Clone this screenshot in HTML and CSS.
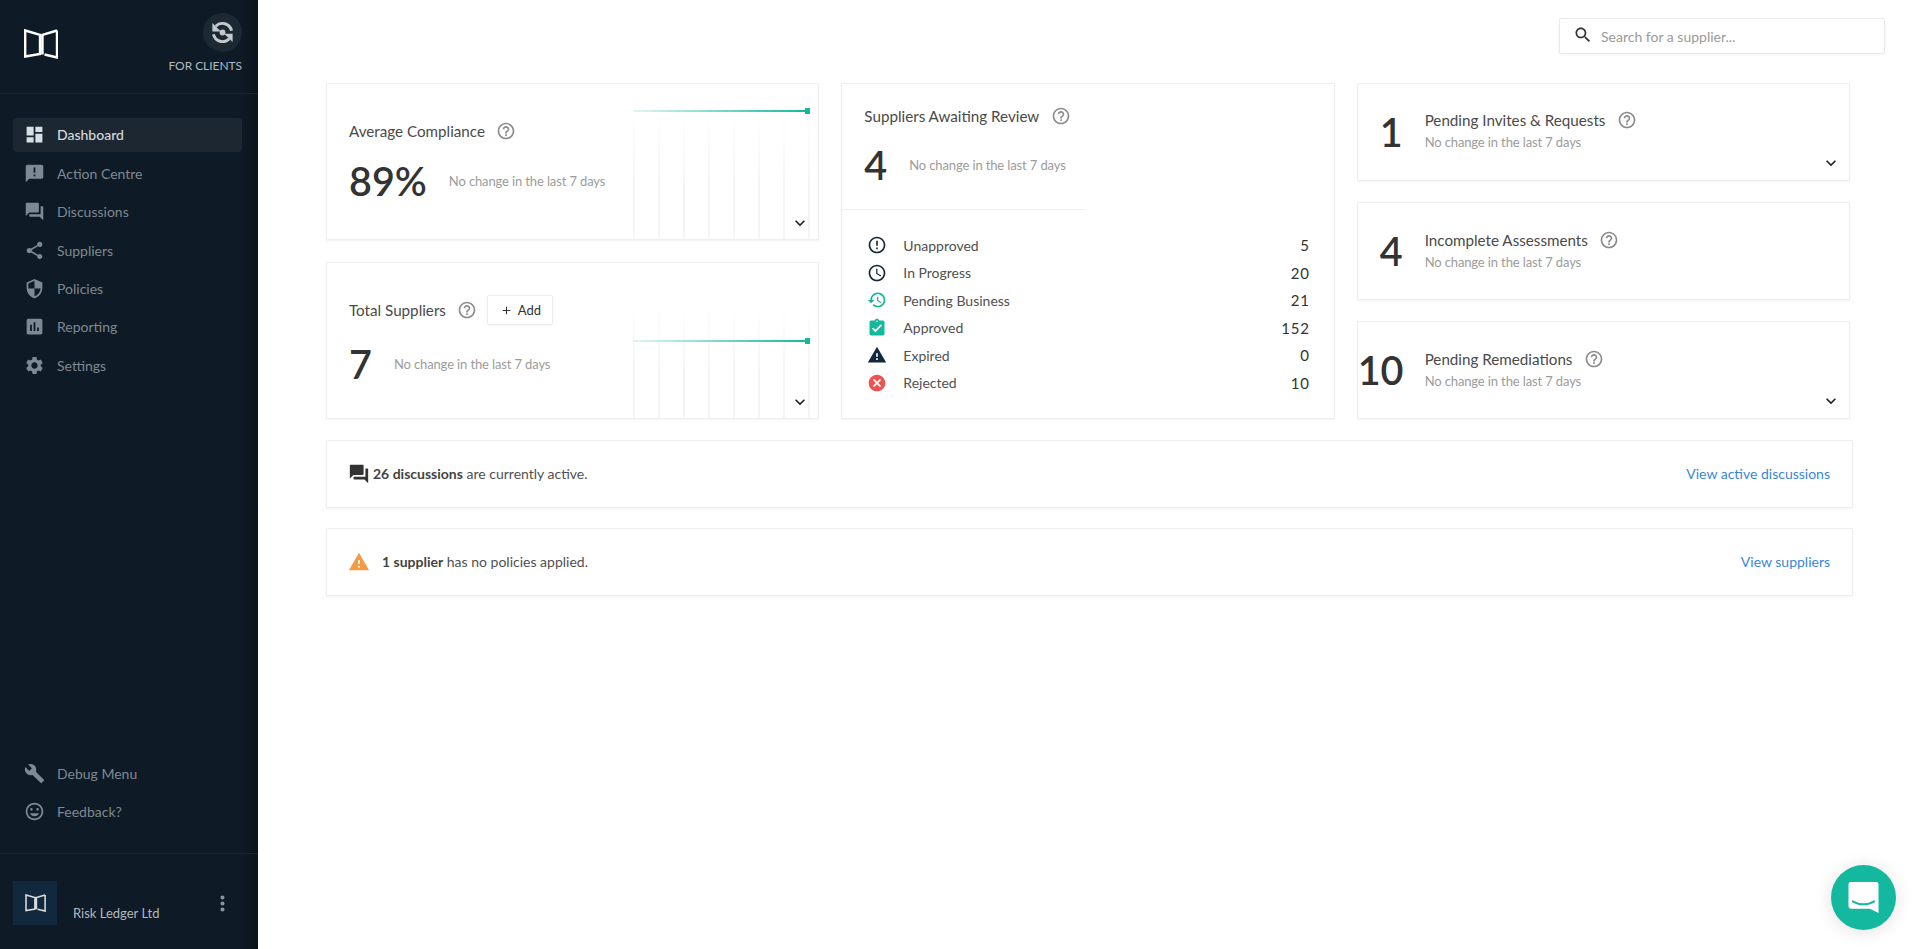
FILE: index.html
```html
<!DOCTYPE html>
<html lang="en">
<head>
<meta charset="utf-8">
<title>Risk Ledger Dashboard</title>
<link rel="stylesheet" href="styles.css">
</head>
<body>
<svg class="sprite" xmlns="http://www.w3.org/2000/svg" aria-hidden="true">
  <symbol id="i-dashboard" viewBox="0 0 24 24"><path d="M3 13h8V3H3v10zm0 8h8v-6H3v6zm10 0h8V11h-8v10zm0-18v6h8V3h-8z"/></symbol>
  <symbol id="i-announce" viewBox="0 0 24 24"><path d="M20 2H4c-1.1 0-1.99.9-1.99 2L2 22l4-4h14c1.1 0 2-.9 2-2V4c0-1.1-.9-2-2-2zm-7 9h-2V5h2v6zm0 4h-2v-2h2v2z"/></symbol>
  <symbol id="i-forum" viewBox="0 0 24 24"><path d="M21 6h-2v9H6v2c0 .55.45 1 1 1h11l4 4V7c0-.55-.45-1-1-1zm-4 6V3c0-.55-.45-1-1-1H3c-.55 0-1 .45-1 1v14l4-4h10c.55 0 1-.45 1-1z"/></symbol>
  <symbol id="i-share" viewBox="0 0 24 24"><path d="M18 16.08c-.76 0-1.44.3-1.96.77L8.91 12.7c.05-.23.09-.46.09-.7s-.04-.47-.09-.7l7.05-4.11c.54.5 1.25.81 2.04.81 1.66 0 3-1.34 3-3s-1.34-3-3-3-3 1.34-3 3c0 .24.04.47.09.7L8.04 9.81C7.5 9.31 6.79 9 6 9c-1.66 0-3 1.34-3 3s1.34 3 3 3c.79 0 1.5-.31 2.04-.81l7.12 4.16c-.05.21-.08.43-.08.65 0 1.61 1.31 2.92 2.92 2.92 1.61 0 2.92-1.31 2.92-2.92s-1.31-2.92-2.92-2.92z"/></symbol>
  <symbol id="i-security" viewBox="0 0 24 24"><path d="M12 1L3 5v6c0 5.55 3.84 10.74 9 12 5.16-1.26 9-6.45 9-12V5l-9-4zm0 10.99h7c-.53 4.12-3.28 7.79-7 8.94V12H5V6.3l7-3.11v8.8z"/></symbol>
  <symbol id="i-report" viewBox="0 0 24 24"><path d="M19 3H5c-1.1 0-2 .9-2 2v14c0 1.1.9 2 2 2h14c1.1 0 2-.9 2-2V5c0-1.1-.9-2-2-2zM9 17H7v-7h2v7zm4 0h-2V7h2v10zm4 0h-2v-4h2v4z"/></symbol>
  <symbol id="i-settings" viewBox="0 0 24 24"><path d="M19.14 12.94c.04-.3.06-.61.06-.94 0-.32-.02-.64-.07-.94l2.03-1.58c.18-.14.23-.41.12-.61l-1.92-3.32c-.12-.22-.37-.29-.59-.22l-2.39.96c-.5-.38-1.03-.7-1.62-.94l-.36-2.54c-.04-.24-.24-.41-.48-.41h-3.84c-.24 0-.43.17-.47.41l-.36 2.54c-.59.24-1.13.57-1.62.94l-2.39-.96c-.22-.08-.47 0-.59.22L2.74 8.87c-.12.21-.08.47.12.61l2.03 1.58c-.05.3-.09.63-.09.94s.02.64.07.94l-2.03 1.58c-.18.14-.23.41-.12.61l1.92 3.32c.12.22.37.29.59.22l2.39-.96c.5.38 1.03.7 1.62.94l.36 2.54c.05.24.24.41.48.41h3.84c.24 0 .44-.17.47-.41l.36-2.54c.59-.24 1.13-.56 1.62-.94l2.39.96c.22.08.47 0 .59-.22l1.92-3.32c.12-.22.07-.47-.12-.61l-2.01-1.58zM12 15.6c-1.98 0-3.6-1.62-3.6-3.6s1.62-3.6 3.6-3.6 3.6 1.62 3.6 3.6-1.62 3.6-3.6 3.6z"/></symbol>
  <symbol id="i-build" viewBox="0 0 24 24"><path d="M22.7 19l-9.1-9.1c.9-2.3.4-5-1.5-6.9-2-2-5-2.4-7.4-1.3L9 6 6 9 1.6 4.7C.4 7.1.9 10.1 2.9 12.1c1.9 1.9 4.6 2.4 6.9 1.5l9.1 9.1c.4.4 1 .4 1.4 0l2.3-2.3c.5-.4.5-1.1.1-1.4z"/></symbol>
  <symbol id="i-mood" viewBox="0 0 24 24"><path d="M11.99 2C6.47 2 2 6.48 2 12s4.47 10 9.99 10C17.52 22 22 17.52 22 12S17.52 2 11.99 2zM12 20c-4.42 0-8-3.58-8-8s3.58-8 8-8 8 3.58 8 8-3.58 8-8 8zm3.5-9c.83 0 1.5-.67 1.5-1.5S16.33 8 15.5 8 14 8.67 14 9.5s.67 1.5 1.5 1.5zm-7 0c.83 0 1.5-.67 1.5-1.5S9.33 8 8.5 8 7 8.67 7 9.5 7.67 11 8.5 11zm3.5 6.5c2.33 0 4.31-1.46 5.11-3.5H6.89c.8 2.04 2.78 3.5 5.11 3.5z"/></symbol>
  <symbol id="i-more" viewBox="0 0 24 24"><path d="M12 8c1.1 0 2-.9 2-2s-.9-2-2-2-2 .9-2 2 .9 2 2 2zm0 2c-1.1 0-2 .9-2 2s.9 2 2 2 2-.9 2-2-.9-2-2-2zm0 6c-1.1 0-2 .9-2 2s.9 2 2 2 2-.9 2-2-.9-2-2-2z"/></symbol>
  <symbol id="i-sync" viewBox="0 0 24 24"><path class="sync-arc" d="M20 10.500A8.200 8.200 0 0 0 6 6.500"/><path class="sync-arc" d="M4 13.500A8.200 8.200 0 0 0 18 17.500"/><path d="M3 3.500V11h7.500zM21 20.500V13h-7.500z"/><circle cx="12" cy="12" r="2.600"/></symbol>
  <symbol id="i-help" viewBox="0 0 24 24"><path d="M11 18h2v-2h-2v2zm1-16C6.48 2 2 6.48 2 12s4.48 10 10 10 10-4.48 10-10S17.52 2 12 2zm0 18c-4.41 0-8-3.59-8-8s3.59-8 8-8 8 3.59 8 8-3.59 8-8 8zm0-14c-2.21 0-4 1.79-4 4h2c0-1.1.9-2 2-2s2 .9 2 2c0 2-3 1.75-3 5h2c0-2.25 3-2.5 3-5 0-2.21-1.79-4-4-4z"/></symbol>
  <symbol id="i-error" viewBox="0 0 24 24"><path d="M11 15h2v2h-2zm0-8h2v6h-2zm.99-5C6.47 2 2 6.48 2 12s4.47 10 9.99 10C17.52 22 22 17.52 22 12S17.52 2 11.99 2zM12 20c-4.42 0-8-3.58-8-8s3.58-8 8-8 8 3.58 8 8-3.58 8-8 8z"/></symbol>
  <symbol id="i-clock" viewBox="0 0 24 24"><path d="M11.99 2C6.47 2 2 6.48 2 12s4.47 10 9.99 10C17.52 22 22 17.52 22 12S17.52 2 11.99 2zM12 20c-4.42 0-8-3.58-8-8s3.58-8 8-8 8 3.58 8 8-3.58 8-8 8zm.5-13H11v6l5.25 3.15.75-1.23-4.5-2.67z"/></symbol>
  <symbol id="i-history" viewBox="0 0 24 24"><path d="M13 3c-4.97 0-9 4.03-9 9H1l3.89 3.89.07.14L9 12H6c0-3.87 3.13-7 7-7s7 3.13 7 7-3.13 7-7 7c-1.93 0-3.68-.79-4.94-2.06l-1.42 1.42C8.27 19.99 10.51 21 13 21c4.97 0 9-4.03 9-9s-4.03-9-9-9zm-1 5v5l4.28 2.54.72-1.21-3.5-2.08V8H12z"/></symbol>
  <symbol id="i-check" viewBox="0 0 24 24"><path d="M19 3h-4.18C14.4 1.84 13.3 1 12 1c-1.3 0-2.4.84-2.82 2H5c-1.1 0-2 .9-2 2v14c0 1.1.9 2 2 2h14c1.1 0 2-.9 2-2V5c0-1.1-.9-2-2-2zm-7 0c.55 0 1 .45 1 1s-.45 1-1 1-1-.45-1-1 .45-1 1-1zm-2 14l-4-4 1.41-1.41L10 14.17l6.59-6.59L18 9l-8 8z"/></symbol>
  <symbol id="i-warning" viewBox="0 0 24 24"><path d="M1 21h22L12 2 1 21zm12-3h-2v-2h2v2zm0-4h-2v-4h2v4z"/></symbol>
  <symbol id="i-cancel" viewBox="0 0 24 24"><path d="M12 2C6.47 2 2 6.47 2 12s4.47 10 10 10 10-4.47 10-10S17.53 2 12 2zm5 13.59L15.59 17 12 13.41 8.41 17 7 15.59 10.59 12 7 8.41 8.41 7 12 10.59 15.59 7 17 8.41 13.41 12 17 15.59z"/></symbol>
  <symbol id="i-search" viewBox="0 0 24 24"><path d="M15.5 14h-.79l-.28-.27C15.41 12.59 16 11.11 16 9.5 16 5.91 13.09 3 9.5 3S3 5.91 3 9.5 5.91 16 9.5 16c1.61 0 3.09-.59 4.23-1.57l.27.28v.79l5 4.99L20.49 19l-4.99-5zm-6 0C7.01 14 5 11.99 5 9.5S7.01 5 9.5 5 14 7.01 14 9.5 11.99 14 9.5 14z"/></symbol>
  <symbol id="i-chevron" viewBox="0 0 24 24"><path d="M16.59 8.59L12 13.17 7.41 8.59 6 10l6 6 6-6z"/></symbol>
  <symbol id="i-plus" viewBox="0 0 24 24"><path d="M19 13h-6v6h-2v-6H5v-2h6V5h2v6h6v2z"/></symbol>
  <symbol id="i-logo" viewBox="0 0 34 30"><path d="M1.200 1.500L16 5.800V25L1.200 27.500zM33 1.500L18.500 5.800V25.500M20.500 25.500L33 28.500V1.500"/></symbol>
</svg>

<div class="app">
  <aside class="sidebar">
    <div class="side-head">
      <svg class="logo"><use href="#i-logo"/></svg>
      <div class="switch">
        <span class="switch-circle"><svg class="switch-icon"><use href="#i-sync"/></svg></span>
        <span class="switch-label">FOR CLIENTS</span>
      </div>
    </div>
    <nav class="nav">
      <a class="nav-item active"><svg class="nav-icon"><use href="#i-dashboard"/></svg>Dashboard</a>
      <a class="nav-item"><svg class="nav-icon"><use href="#i-announce"/></svg>Action Centre</a>
      <a class="nav-item"><svg class="nav-icon"><use href="#i-forum"/></svg>Discussions</a>
      <a class="nav-item"><svg class="nav-icon"><use href="#i-share"/></svg>Suppliers</a>
      <a class="nav-item"><svg class="nav-icon"><use href="#i-security"/></svg>Policies</a>
      <a class="nav-item"><svg class="nav-icon"><use href="#i-report"/></svg>Reporting</a>
      <a class="nav-item"><svg class="nav-icon"><use href="#i-settings"/></svg>Settings</a>
    </nav>
    <nav class="nav nav-bottom">
      <a class="nav-item"><svg class="nav-icon"><use href="#i-build"/></svg>Debug Menu</a>
      <a class="nav-item"><svg class="nav-icon"><use href="#i-mood"/></svg>Feedback?</a>
    </nav>
    <div class="org">
      <span class="org-tile"><svg class="org-logo"><use href="#i-logo"/></svg></span>
      <span class="org-name">Risk Ledger Ltd</span>
      <svg class="org-more"><use href="#i-more"/></svg>
    </div>
  </aside>

  <main class="main">
    <div class="topbar">
      <label class="search">
        <svg class="search-icon"><use href="#i-search"/></svg>
        <span class="search-text">Search for a supplier...</span>
      </label>
    </div>

    <section class="grid">
      <div class="stack">
        <article class="card chart-card compliance">
          <div class="chart"><span class="chart-line"></span><span class="chart-dot"></span></div>
          <h2 class="title">Average Compliance<svg class="help"><use href="#i-help"/></svg></h2>
          <div class="figure"><span class="num">89%</span><span class="sub">No change in the last 7 days</span></div>
          <svg class="chevron"><use href="#i-chevron"/></svg>
        </article>
        <article class="card chart-card total">
          <div class="chart chart-low"><span class="chart-line"></span><span class="chart-dot"></span></div>
          <h2 class="title">Total Suppliers<svg class="help"><use href="#i-help"/></svg><span class="add"><svg class="add-icon"><use href="#i-plus"/></svg>Add</span></h2>
          <div class="figure"><span class="num">7</span><span class="sub">No change in the last 7 days</span></div>
          <svg class="chevron"><use href="#i-chevron"/></svg>
        </article>
      </div>

      <article class="card review">
        <div class="review-head">
          <h2 class="title">Suppliers Awaiting Review<svg class="help"><use href="#i-help"/></svg></h2>
          <div class="figure"><span class="num">4</span><span class="sub">No change in the last 7 days</span></div>
        </div>
        <ul class="status-list">
          <li class="status"><svg class="status-icon navy"><use href="#i-error"/></svg><span class="status-label">Unapproved</span><span class="status-val">5</span></li>
          <li class="status"><svg class="status-icon navy"><use href="#i-clock"/></svg><span class="status-label">In Progress</span><span class="status-val">20</span></li>
          <li class="status"><svg class="status-icon teal"><use href="#i-history"/></svg><span class="status-label">Pending Business</span><span class="status-val">21</span></li>
          <li class="status"><svg class="status-icon teal"><use href="#i-check"/></svg><span class="status-label">Approved</span><span class="status-val">152</span></li>
          <li class="status"><svg class="status-icon navy"><use href="#i-warning"/></svg><span class="status-label">Expired</span><span class="status-val">0</span></li>
          <li class="status"><svg class="status-icon red"><use href="#i-cancel"/></svg><span class="status-label">Rejected</span><span class="status-val">10</span></li>
        </ul>
      </article>

      <div class="stack stack-three">
        <article class="card mini">
          <span class="num mini-num">1</span>
          <div class="mini-body"><h2 class="title">Pending Invites &amp; Requests<svg class="help"><use href="#i-help"/></svg></h2><span class="sub">No change in the last 7 days</span></div>
          <svg class="chevron chevron-mini"><use href="#i-chevron"/></svg>
        </article>
        <article class="card mini">
          <span class="num mini-num">4</span>
          <div class="mini-body"><h2 class="title">Incomplete Assessments<svg class="help"><use href="#i-help"/></svg></h2><span class="sub">No change in the last 7 days</span></div>
        </article>
        <article class="card mini">
          <span class="num mini-num">10</span>
          <div class="mini-body"><h2 class="title">Pending Remediations<svg class="help"><use href="#i-help"/></svg></h2><span class="sub">No change in the last 7 days</span></div>
          <svg class="chevron chevron-mini"><use href="#i-chevron"/></svg>
        </article>
      </div>
    </section>

    <section class="notices">
      <div class="card notice">
        <svg class="notice-icon dark"><use href="#i-forum"/></svg>
        <p class="notice-text"><b>26 discussions</b> are currently active.</p>
        <a class="notice-link">View active discussions</a>
      </div>
      <div class="card notice">
        <svg class="notice-icon orange"><use href="#i-warning"/></svg>
        <p class="notice-text notice-warn"><b>1 supplier</b> has no policies applied.</p>
        <a class="notice-link">View suppliers</a>
      </div>
    </section>
  </main>
</div>

<div class="chat">
  <svg class="chat-icon" viewBox="0 0 32 34"><path class="chat-bubble" d="M3 1h26a2.500 2.500 0 0 1 2.500 2.500V33l-9-4.500H3A2.500 2.500 0 0 1 .5 26V3.500A2.500 2.500 0 0 1 3 1z"/><path class="chat-smile" d="M5 21c6 4 16 4 22 0"/></svg>
</div>
</body>
</html>
```

FILE: styles.css
```css
* { box-sizing: border-box; }
html, body { margin: 0; height: 100%; overflow: hidden; background: #fff; }
body { font-family: "Lato", "Liberation Sans", sans-serif; color: #3c3c3c; }
h2, p, ul { margin: 0; padding: 0; font-weight: inherit; font-size: inherit; }
ul { list-style: none; }
.sprite { display: none; }
.app { display: flex; height: 949px; }

/* Sidebar */
.sidebar {
  flex: 0 0 258px; height: 949px; display: flex; flex-direction: column;
  background: linear-gradient(90deg, #0e1a26 0, #0e1a26 93%, #0a141c 100%);
  color: #8b949c;
}
.side-head {
  height: 94px; flex: none; display: flex; justify-content: space-between; align-items: flex-start;
  padding: 13px 16px 0 24px; border-bottom: 1px solid #17232e;
}
.logo { width: 34px; height: 30px; margin-top: 16px; fill: none; stroke: #fff; stroke-width: 2.4; }
.switch { display: flex; flex-direction: column; align-items: flex-end; }
.switch-circle { width: 39px; height: 39px; border-radius: 50%; background: #1c2832; display: flex; align-items: center; justify-content: center; }
.switch-icon { width: 27px; height: 27px; fill: #c3c9ce; }
.sync-arc { fill: none; stroke: #c3c9ce; stroke-width: 2.6; }
.switch-label { margin-top: 6px; font-size: 12px; line-height: 16px; color: #b3b9be; letter-spacing: -.05px; }
.nav { display: flex; flex-direction: column; gap: 4.400px; padding: 24px 16px 0 13px; }
.nav-bottom { margin-top: auto; gap: 4px; padding-top: 0; }
.nav-item {
  height: 34px; display: flex; align-items: center; padding-left: 11px; border-radius: 4px;
  font-size: 14px; color: #7f8991;
}
.nav-item.active { background: #1c2731; color: #d6dade; font-weight: 500; padding-bottom: 2px; }
.nav-icon { width: 21px; height: 21px; flex: none; margin-right: 12px; fill: #7d8993; }
.active .nav-icon { fill: #d6dfe6; }
.org {
  flex: none; height: 96px; margin-top: 25px; border-top: 1px solid #17232e;
  display: flex; align-items: flex-start; padding: 27px 0 0 13px; position: relative;
}
.org-tile { width: 44px; height: 44px; background: #12293d; display: flex; align-items: center; justify-content: center; }
.org-logo { width: 21px; height: 18px; fill: none; stroke: #d9dde0; stroke-width: 2.6; }
.org-name { margin: 23px 0 0 16px; font-size: 13px; line-height: 18px; color: #b3b9be; }
.org-more { width: 21px; height: 21px; margin: 12px 0 0 53px; fill: #8b949c; transform: scale(1.15); }

/* Main */
.main { flex: 1; min-width: 0; padding: 18px 0 0 68px; }
.topbar { display: flex; justify-content: flex-end; padding-right: 32px; }
.search {
  width: 326px; height: 36px; display: flex; align-items: center; padding-left: 13px;
  border: 1px solid #eaeaea; border-radius: 2px; box-shadow: 0 1px 3px rgba(0,0,0,.05);
}
.search-icon { width: 20px; height: 20px; fill: #333; margin-right: 8px; margin-top: -3px; }
.search-text { font-size: 14px; color: #9a9a9a; }

.grid {
  width: 1524px; margin-top: 29px; display: grid; grid-template-columns: repeat(3, 1fr);
  column-gap: 22px; height: 336px;
}
.stack { display: grid; grid-template-rows: 157px 157px; row-gap: 22px; }
.stack-three { grid-template-rows: 98px 98px 98px; row-gap: 21px; }
.card { background: #fff; border: 1px solid #eee; border-radius: 1px; box-shadow: 0 1px 2px rgba(0,0,0,.05); position: relative; }
.title { display: flex; align-items: center; font-size: 15.200px; line-height: 20px; color: #4a4a4a; font-weight: 400; }
.help { width: 20px; height: 20px; margin-left: 11.500px; fill: #8c8c8c; flex: none; }
.figure { display: flex; align-items: center; gap: 22px; }
.num { font-size: 39.500px; line-height: 48px; color: #333; font-weight: 600; }
.sub { font-size: 13px; letter-spacing: -.13px; color: #9c9c9c; font-weight: 400; }

.chart-card { padding-left: 22px; }
.compliance { padding-top: 37px; }
.total { padding-top: 32px; }
.compliance .figure { margin-top: 16px; }
.total .figure { margin-top: 14.500px; }
.chart { position: absolute; left: 306px; right: 8px; bottom: 0; top: 27px; }
.chart::before {
  content: ""; position: absolute; inset: 0;
  background: repeating-linear-gradient(90deg, #f5f5f5 0, #f5f5f5 1.500px, transparent 1.500px, transparent 25px);
  -webkit-mask-image: linear-gradient(180deg, transparent 0, #000 55%);
  mask-image: linear-gradient(180deg, transparent 0, #000 55%);
}
.chart-low { top: 78px; }
.chart-low::before { top: -38px; }
.chart-line { position: absolute; left: 0; right: 4px; top: -1px; height: 2px; background: linear-gradient(90deg, rgba(20,184,158,.12), #14b89e); }
.chart-dot { position: absolute; right: 0; top: -3px; width: 5px; height: 6px; background: #14b89e; }
.chevron { position: absolute; right: 8px; bottom: 6px; width: 20px; height: 20px; fill: #222; }
.chevron-mini { right: 8px; bottom: 7px; }

.review { display: flex; flex-direction: column; }
.review-head { height: 126px; padding: 22px 0 0 22px; border-bottom: 1px solid #eee; width: 244px; }
.review-head .title { white-space: nowrap; }
.review-head .figure { margin-top: 15px; }
.status-list { padding: 23px 24px 0 25px; display: flex; flex-direction: column; gap: 3.500px; }
.status { height: 24px; display: flex; align-items: center; font-size: 14px; color: #505050; }
.status-icon { width: 20px; height: 20px; flex: none; margin-right: 16px; }
.navy { fill: #12293d; }
.teal { fill: #14b89e; }
.red { fill: #ef5350; }
.status-label { flex: 1; }
.status-val { font-size: 15px; color: #333; letter-spacing: .8px; }

.mini { display: flex; align-items: center; padding-bottom: 1px; }
.mini-num { width: 45px; flex: none; text-align: right; margin-right: 22px; }
.mini-body { display: flex; flex-direction: column; gap: 4px; padding-bottom: 4px; }
.mini + .mini .mini-body { padding-bottom: 2px; }

.add {
  margin-left: 10px; width: 66px; height: 30px; display: flex; align-items: center; justify-content: center;
  border: 1px solid #eee; border-radius: 2px; box-shadow: 0 1px 2px rgba(0,0,0,.05);
  font-size: 13px; color: #333;
}
.add-icon { width: 13px; height: 13px; fill: #333; margin-right: 5px; }

.notices { width: 1527px; margin-top: 21px; display: flex; flex-direction: column; gap: 20px; }
.notice { height: 68px; display: flex; align-items: center; padding: 0 22px 2px; font-size: 14px; }
.notice-icon { width: 22px; height: 22px; flex: none; margin-left: -1px; margin-top: 1px; }
.dark { fill: #333; }
.orange { fill: #f59a45; }
.notice-text { flex: 1; margin-left: 3px; color: #505050; }
.notice-warn { margin-left: 12px; }
.notice-text b { font-weight: 700; color: #444; }
.notice-link { color: #3b86d8; font-size: 14px; }

/* Chat launcher */
.chat {
  position: fixed; left: 1831px; top: 865px; width: 65px; height: 65px; border-radius: 50%;
  background: #14b89e; display: flex; align-items: center; justify-content: center;
  box-shadow: 0 2px 18px rgba(0,0,0,.12);
}
.chat-icon { width: 31px; height: 33px; }
.chat-bubble { fill: #fff; }
.chat-smile { fill: none; stroke: #14b89e; stroke-width: 2; stroke-linecap: round; }
```
